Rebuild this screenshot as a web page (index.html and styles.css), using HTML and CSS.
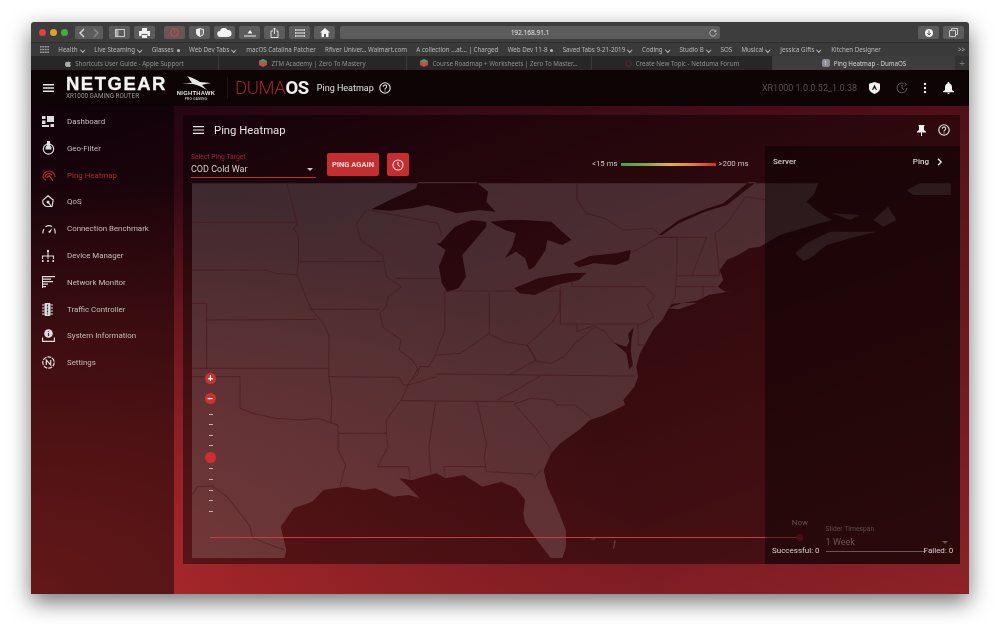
FILE: index.html
```html
<!DOCTYPE html>
<html lang="en">
<head>
<meta charset="utf-8">
<title>Ping Heatmap - DumaOS</title>
<link rel="stylesheet" href="styles.css">
</head>
<body>
<div class="window">
  <div class="toolbar">
    <div class="lights"><i class="light red"></i><i class="light yellow"></i><i class="light green"></i></div>
    <div class="tb-btn nav">
      <svg width="14" height="12" viewBox="0 0 14 12"><path d="M9 2 5 6l4 4" fill="none" stroke="#ddd" stroke-width="1.4"/></svg>
      <svg width="14" height="12" viewBox="0 0 14 12"><path d="m5 2 4 4-4 4" fill="none" stroke="#888" stroke-width="1.4"/></svg>
    </div>
    <div class="tb-btn"><svg width="10" height="8" viewBox="0 0 10 8"><rect x=".5" y=".5" width="9" height="7" fill="none" stroke="#ccc"/><rect x="1" y="1" width="2.5" height="6" fill="#aaa"/></svg></div>
    <div class="tb-btn"><svg width="11" height="10" viewBox="0 0 11 10"><path d="M3 0h5v3H3zM0 3h11v5H8.500V6h-6v2H0zM3 7h5v3H3z" fill="#eee"/></svg></div>
    <div class="tb-btn stop"><svg width="9" height="9" viewBox="0 0 9 9"><circle cx="4.500" cy="4.500" r="3.700" fill="none" stroke="#c0504f" stroke-width="1.100"/><path d="M4.500 2.200v2.500" stroke="#c0504f"/></svg></div>
    <div class="tb-btn"><svg width="8" height="9" viewBox="0 0 8 9"><path d="M4 0 8 1.300V5c0 2-2 3.300-4 4-2-.7-4-2-4-4V1.300z" fill="#eee"/><path d="M4 1 7 2v3c0 1.500-1.500 2.500-3 3z" fill="#777"/></svg></div>
    <div class="tb-btn"><svg width="15" height="9" viewBox="0 0 15 9"><path d="M3.500 9a3 3 0 0 1-.5-6 4 4 0 0 1 7.500-1 3.500 3.500 0 0 1 1 7z" fill="#f2f2f2"/></svg></div>
    <div class="tb-btn"><svg width="12" height="8" viewBox="0 0 12 8"><path d="M0 6.500h12v1H0zM6 1l2.500 3.500h-5z" fill="#eee"/></svg></div>
    <div class="tb-btn"><svg width="9" height="11" viewBox="0 0 9 11"><path d="M1 4h2M6 4h2M1 4v6.500h7V4" fill="none" stroke="#ddd"/><path d="M4.500 7V1M3 2.500 4.500 1 6 2.500" fill="none" stroke="#ddd"/></svg></div>
    <div class="tb-btn"><svg width="10" height="8" viewBox="0 0 10 8"><path d="M0 0h10v2H0zM0 3h10v2H0zM0 6h10v2H0z" fill="#ccc"/><path d="M2 0v8M4 0v8M6 0v8M8 0v8" stroke="#5d5d5d" stroke-width=".7"/></svg></div>
    <div class="tb-btn"><svg width="10" height="9" viewBox="0 0 10 9"><path d="M5 0 10 4.500H8.500V9H6V6H4v3H1.500V4.500H0z" fill="#f2f2f2"/></svg></div>
    <div class="url"><span class="url-text">192.168.91.1</span>
      <svg class="reload" width="8" height="8" viewBox="0 0 8 8"><path d="M6.800 2.500A3.200 3.200 0 1 0 7.200 4M6.900.8v1.900H5" fill="none" stroke="#ccc" stroke-width=".8"/></svg>
    </div>
    <div class="tb-btn wide"><svg width="8" height="8" viewBox="0 0 8 8"><circle cx="4" cy="4" r="4" fill="#f2f2f2"/><path d="M4 1.500V6M2.300 4.300 4 6l1.700-1.700" fill="none" stroke="#555"/></svg></div>
    <div class="tb-btn wide"><svg width="9" height="9" viewBox="0 0 9 9"><path d="M.5 2.500h6v6h-6zM2.500 2.500v-2h6v6h-2" fill="none" stroke="#ccc"/></svg></div>
  </div>

  <div class="bookmarks">
    <svg class="bm-grid" width="9" height="7" viewBox="0 0 9 7"><path d="M0 0h9v1.500H0zM0 2.700h9v1.500H0zM0 5.400h9V7H0z" fill="#999"/><path d="M2 0v7M4.500 0v7M7 0v7" stroke="#3a3a3a" stroke-width=".6"/></svg>
    <span class="bm menu">Health</span>
    <span class="bm menu">Live Steaming</span>
    <span class="bm dot">Glasses</span>
    <span class="bm menu">Web Dev Tabs</span>
    <span class="bm">macOS Catalina Patcher</span>
    <span class="bm">Rfiver Univer... Walmart.com</span>
    <span class="bm">A collection ...at... | Charged</span>
    <span class="bm dot">Web Dev 11-8</span>
    <span class="bm menu">Saved Tabs 9-21-2019</span>
    <span class="bm menu">Coding</span>
    <span class="bm menu">Studio B</span>
    <span class="bm">SOS</span>
    <span class="bm menu">Musical</span>
    <span class="bm menu">Jessica Gifts</span>
    <span class="bm">Kitchen Designer</span>
    <span class="bm more">&gt;&gt;</span>
  </div>

  <div class="tabs">
    <div class="tab"><svg width="6" height="7" viewBox="0 0 6 7"><path d="M4 0 3 1.500 4 1.700C4.800 2 6 2 6 2 4.800 3 5 5 6 5.200 5.500 6.500 4.800 7 4.300 7 3.800 7 3.500 6.700 3 6.700S2.200 7 1.700 7C.8 7 0 5.500 0 4c0-1.500 1-2.300 2-2.300.4 0 .7.100 1 .2z" fill="#aaa"/></svg>Shortcuts User Guide - Apple Support</div>
    <div class="tab"><svg width="8" height="8" viewBox="0 0 8 8"><path d="M4 0 8 2v4L4 8 0 6V2z" fill="#c0504a"/><path d="M4 0 8 2 4 4 0 2z" fill="#4f9a5c"/></svg>ZTM Academy | Zero To Mastery</div>
    <div class="tab"><svg width="8" height="8" viewBox="0 0 8 8"><path d="M4 0 8 2v4L4 8 0 6V2z" fill="#c0504a"/><path d="M4 0 8 2 4 4 0 2z" fill="#4f9a5c"/></svg>Course Roadmap + Worksheets | Zero To Master...</div>
    <div class="tab"><svg width="7" height="7" viewBox="0 0 7 7"><circle cx="3.500" cy="3.500" r="2.800" fill="none" stroke="#5c2a2a"/></svg>Create New Topic - Netduma Forum</div>
    <div class="tab active"><span class="tab-badge">1</span>Ping Heatmap - DumaOS</div>
    <div class="tab add">+</div>
  </div>

  <header class="app-header">
    <svg class="burger" width="11" height="8" viewBox="0 0 11 8"><path d="M0 0h11v1.400H0zM0 3.300h11v1.400H0zM0 6.600h11V8H0z" fill="#e8e8e8"/></svg>
    <div class="brand"><div class="netgear">NETGEAR</div><div class="model">XR1000 GAMING ROUTER</div></div>
    <div class="nighthawk">
      <svg width="30" height="14" viewBox="0 0 30 14"><path d="M6 0c6 2 10 4 13 6l11 1c-4 1-7 1-9 2l5 5c-5-3-9-5-14-6L1 8c4-.5 7-.5 10-1C9 4 8 2 6 0z" fill="#e8e8e8"/></svg>
      <div class="nh-name">NIGHTHAWK</div><div class="nh-sub">PRO GAMING</div>
    </div>
    <div class="duma"><span class="duma-thin">DUMA</span><span class="duma-bold">OS</span></div>
    <div class="head-title">Ping Heatmap</div>
    <svg class="help" width="12" height="12" viewBox="0 0 12 12"><circle cx="6" cy="6" r="5.200" fill="none" stroke="#e8e8e8" stroke-width="1.100"/><path d="M4.300 4.700A1.700 1.700 0 1 1 6.800 6.100C6.200 6.500 6 6.800 6 7.500M6 8.400v1.100" fill="none" stroke="#e8e8e8" stroke-width="1.100"/></svg>
    <div class="version">XR1000 1.0.0.52_1.0.38</div>
    <div class="head-icons">
      <svg width="11" height="12" viewBox="0 0 11 12"><path d="M5.500 0 11 1.800V6.500C11 9 8.500 11 5.500 12 2.500 11 0 9 0 6.500V1.800z" fill="#f2f2f2"/><path d="M5.500 2.500 8 8H7L5.500 6 4 8H3z" fill="#111"/></svg>
      <svg width="12" height="12" viewBox="0 0 12 12"><path d="M10.800 6A4.900 4.900 0 1 1 7.500 1.300M6 3v3.300l2 1.200M8.500.8l2 1.500-2 1.500" fill="none" stroke="#6b5b5b" stroke-width="1"/></svg>
      <svg width="4" height="12" viewBox="0 0 4 12"><circle cx="2" cy="2" r="1.200" fill="#eee"/><circle cx="2" cy="6" r="1.200" fill="#eee"/><circle cx="2" cy="10" r="1.200" fill="#eee"/></svg>
      <svg width="11" height="12" viewBox="0 0 11 12"><path d="M5.500 0c.6 0 1 .4 1 1v.6C8.300 2 9 3.600 9 5.500V8l2 1.500v.7H0v-.7L2 8V5.500C2 3.600 2.700 2 4.500 1.600V1c0-.6.400-1 1-1zM4.200 10.800h2.600c0 .7-.6 1.200-1.300 1.200s-1.300-.5-1.300-1.200z" fill="#f4f4f4"/></svg>
    </div>
  </header>

  <div class="app">
    <nav class="sidebar">
      <a class="nav-item"><svg width="12" height="11" viewBox="0 0 12 11"><path d="M0 0h3.500v3H0zM5 0h7v6H5zM0 4.500h3.500V8H0zM0 9h7v2H0zM8.500 8H12v3H8.500z" fill="#ddd"/></svg>Dashboard</a>
      <a class="nav-item"><svg width="13" height="14" viewBox="0 0 13 14"><circle cx="6.500" cy="8" r="5.200" fill="none" stroke="#ddd" stroke-width="1.200"/><path d="M5 0h3v4l1.500 2.500v2h-6v-2L5 4z" fill="#ddd"/></svg>Geo-Filter</a>
      <a class="nav-item current"><svg width="14" height="12" viewBox="0 0 14 12"><path d="M1 8a6 6 0 0 1 12 0M3 8.500a4 4 0 0 1 7-2.500M5 9a2 2 0 0 1 3-1.500M7 6l4 6" fill="none" stroke="#b3262b" stroke-width="1.200"/><path d="M1 8c.5 1.500 1.500 2.500 3 3.300" fill="none" stroke="#b3262b" stroke-width="1.200"/></svg>Ping Heatmap</a>
      <a class="nav-item"><svg width="12" height="13" viewBox="0 0 12 13"><path d="M6 .8 11.200 5 10 11.500H5A5 5 0 0 1 1 5z" fill="none" stroke="#ddd" stroke-width="1.200"/><circle cx="6" cy="7" r="1.500" fill="#ddd"/><path d="m6 7 3 4" stroke="#ddd" stroke-width="1.200"/></svg>QoS</a>
      <a class="nav-item"><svg width="14" height="10" viewBox="0 0 14 10"><path d="M1 9.500A6 6 0 0 1 2 5M3.500 2.800A6 6 0 0 1 10 2.500M12 4.500a6 6 0 0 1 1 5" fill="none" stroke="#ddd" stroke-width="1.200"/><path d="M6 8 10.500 4 8 9z" fill="#ddd"/></svg>Connection Benchmark</a>
      <a class="nav-item"><svg width="12" height="12" viewBox="0 0 12 12"><path d="M5 0h2v2H5zM5.500 2h1v4h-1zM0 5.500h12v1H0zM0 6.500h1V9H0zM11 6.500h1V9h-1zM5.500 6.500h1V9h-1zM0 10h1.500v2H0zM5.200 10h1.600v2H5.200zM10.500 10H12v2h-1.500z" fill="#ddd"/></svg>Device Manager</a>
      <a class="nav-item"><svg width="13" height="12" viewBox="0 0 13 12"><path d="M0 0h1v12H0zM1 0h12v1.300H1zM1 2.500h8v1.300H1zM1 5h10v1.300H1zM1 7.500h5v1.300H1zM1 10h3v1.300H1z" fill="#ddd"/></svg>Network Monitor</a>
      <a class="nav-item"><svg width="11" height="13" viewBox="0 0 11 13"><rect x="2.500" y="0" width="6" height="13" rx="1" fill="#ddd"/><path d="M0 2h2.500M0 5h2.500M0 8h2.500M0 11h2.500M8.500 2H11M8.500 5H11M8.500 8H11M8.500 11H11" stroke="#ddd"/><path d="M5.500 1.500v10" stroke="#333" stroke-width="1.200" stroke-dasharray="2 1"/></svg>Traffic Controller</a>
      <a class="nav-item"><svg width="13" height="13" viewBox="0 0 13 13"><circle cx="6.500" cy="4.500" r="4.300" fill="#ddd"/><path d="M6.500 2.200v.9M6.500 4v3" stroke="#333" stroke-width="1.200"/><path d="M.6 8.500V12.300H12.400V8.500" fill="none" stroke="#ddd" stroke-width="1.200"/></svg>System Information</a>
      <a class="nav-item"><svg width="13" height="13" viewBox="0 0 13 13"><circle cx="6.500" cy="6.500" r="5.700" fill="none" stroke="#ddd" stroke-width="1.200" stroke-dasharray="4 1"/><path d="M4.300 9V4l4.400 5V4" fill="none" stroke="#ddd" stroke-width="1.200"/></svg>Settings</a>
    </nav>

    <main class="main">
      <section class="card">
        <div class="card-head">
          <svg width="11" height="8" viewBox="0 0 11 8"><path d="M0 0h11v1.200H0zM0 3.400h11v1.200H0zM0 6.800h11V8H0z" fill="#e8e8e8"/></svg>
          <h1 class="card-title">Ping Heatmap</h1>
          <div class="card-actions">
            <svg width="9" height="11" viewBox="0 0 9 11"><path d="M1.500 0h6v1H7v4l2 1.500v1H5V11H4V7.500H0v-1L2 5V1h-.5z" fill="#eee"/></svg>
            <svg width="12" height="12" viewBox="0 0 12 12"><circle cx="6" cy="6" r="5.200" fill="none" stroke="#e8e8e8" stroke-width="1.100"/><path d="M4.300 4.700A1.700 1.700 0 1 1 6.800 6.100C6.200 6.500 6 6.800 6 7.500M6 8.400v1.100" fill="none" stroke="#e8e8e8" stroke-width="1.100"/></svg>
          </div>
        </div>
        <div class="controls">
          <div class="select">
            <div class="select-label">Select Ping Target</div>
            <div class="select-value">COD Cold War<i class="caret"></i></div>
          </div>
          <button class="btn ping">PING AGAIN</button>
          <button class="btn clock"><svg width="12" height="12" viewBox="0 0 12 12"><circle cx="6" cy="6" r="5" fill="none" stroke="#f1d9d9" stroke-width="1.100"/><path d="M6 3v3.200l2.200 1.300" fill="none" stroke="#f1d9d9" stroke-width="1"/></svg></button>
          <div class="legend"><span>&lt;15 ms</span><i class="legend-bar"></i><span>&gt;200 ms</span></div>
        </div>
        <div class="map">
          <svg class="map-svg" viewBox="5.400 6 2049.300 1128" preserveAspectRatio="none">
            <path class="land" fill-rule="evenodd" d="M0 10H1696L1687 40 1665 65 1696 95 1732 120 1683 135 1593 165 1539 200 1510 205 1480 225 1450 240 1430 270 1440 300 1425 320 1445 335 1465 333 1400 345 1370 362 1300 372 1285 400 1275 420 1250 450 1235 480 1215 520 1205 560 1210 590 1200 620 1170 660 1175 675 1120 705 1080 720 1050 750 1000 790 975 820 955 870 965 920 990 980 1015 1050 1015 1100 1005 1135 975 1135 940 1085 905 1030 900 1000 905 960 880 925 840 905 790 920 740 885 690 895 665 880 600 900 565 895 590 920 620 955 590 945 550 950 500 925 470 930 420 920 360 930 330 965 280 985 245 1040 260 1110 255 1135H0Z
            M490 88 540 60 610 25 620-5H760L805 35 800 65 825 95 780 90 720 100 680 85 640 75 600 85 540 92Z
            M675 190 715 140 760 120 800 125 800 140 770 180 735 225 745 290 725 325 695 335 680 310 672 260 690 210 665 190Z
            M810 125 860 120 900 120 975 125 1000 150 1030 180 1005 195 965 180 960 210 930 260 915 270 905 235 880 215 850 235 870 200 880 160 850 150Z
            M875 325 940 295 1020 280 1070 278 1050 300 990 315 930 345 890 340Z
            M1035 250 1080 228 1150 220 1190 210 1185 240 1150 255 1090 250 1050 262Z
            M1265 165 1320 120 1390 88 1440 70 1510 5 1530 5 1450 75 1390 95 1320 130 1275 165Z
            M1198 442 1183 462 1186 485 1178 500 1145 488 1178 520 1186 568 1196 555 1190 515 1192 480Z"/>
            <path class="land" d="M1290 385 1330 368 1370 368 1320 388ZM1634 220 1665 190 1728 155 1854 155 1782 175 1719 195 1674 235 1656 243ZM1732 100 1809 105 1782 120ZM1845 120 1885 80 1908 120 1872 140ZM1935 30 1971 10 2054 10V45H1953ZM1080 1078 1098 1072 1090 1080ZM1145 1080 1150 1082 1145 1108 1142 1105Z"/>
            <g class="borders">
              <path d="M262 10 280 90 290 130 280 145 293 170V245M5 127H285M293 245H520M475 90 450 130 460 180 520 225 530 290 570 320 535 350 530 380 513 400 520 440 570 480 565 510 600 540 615 565 600 600"/>
              <path d="M480 90 600 115 670 130 680 170M5 270H205L230 280 290 285 320 370 330 390 360 430 375 465V565M293 245 288 285M320 388H513M5 370H45V565M45 420 340 418M5 565H375V590"/>
              <path d="M5 590H135V685L170 700 230 715 300 720 345 715 400 735M375 590 383 660 380 730M375 590 565 592 575 615H590M400 735V810L420 855 405 920M400 760H530M555 295H675"/>
              <path d="M688 335V450L660 530 645 560H620L615 585 595 600 570 660 530 720V760L535 800 507 860H590L595 895M688 333H1000M808 335V460L770 490 730 520 665 525M808 463 850 485 905 495 915 500"/>
              <path d="M1000 320 998 390 975 430 910 495 935 540 860 585M915 500 935 545 975 550 1010 530 1040 490 1095 440 1120 455 1145 490M1030 320H1230L1255 350 1235 375 1252 410 1220 432H1000V330M1045 432V455L1095 435M1210 432V495H1240"/>
              <path d="M665 582 1200 588M590 615 665 590M570 662 875 665M663 665 645 800 650 880M775 665 800 790 795 830 800 875 925 882 930 890 950 870M685 860H800M685 860 690 890M945 588 890 625 830 660"/>
              <path d="M875 672 920 655 980 660 990 675H1040L1085 715M875 672 930 740 975 808M1035 290 1030 320M1190 220 1265 172H1315V250L1310 350 1300 370M1265 172H1395L1355 285M1418 160 1430 285M1315 287H1430M1310 320H1420M1385 320V350M1418 160 1450 130 1500 50 1560 60"/>
              <path d="M1045 10V60L1070 100 1120 115 1170 150 1250 145 1265 160M5 945 20 920 60 918 100 950 160 1035 170 1075 255 1110"/>
            </g>
          </svg>
          <div class="zoom-slider">
            <button class="zoom-btn">+</button>
            <button class="zoom-btn">&minus;</button>
            <div class="ticks">
              <i class="tick"></i><i class="tick"></i><i class="tick"></i><i class="tick"></i>
              <i class="thumb"></i>
              <i class="tick"></i><i class="tick"></i><i class="tick"></i><i class="tick"></i><i class="tick"></i>
            </div>
          </div>
          <div class="timeline"><span class="now">Now</span><i class="timeline-dot"></i></div>
        </div>
        <aside class="server-panel">
          <div class="server-head"><span>Server</span><span class="ping-col">Ping</span>
            <svg width="6" height="8" viewBox="0 0 6 8"><path d="m1 .8 3.200 3.200L1 7.200" fill="none" stroke="#eee" stroke-width="1.300"/></svg>
          </div>
        </aside>
        <div class="stats">
          <span class="stat">Successful: 0</span>
          <div class="timespan">
            <div class="ts-label">Slider Timespan</div>
            <div class="ts-value">1 Week<i class="caret dim"></i></div>
          </div>
          <span class="stat">Failed: 0</span>
        </div>
      </section>
    </main>
  </div>
</div>
</body>
</html>
```
FILE: styles.css
```css
* { box-sizing: border-box; }
html, body { margin: 0; height: 100%; background: #fff; overflow: hidden; }
body { padding: 22px 31px 41px; font-family: Roboto, "Liberation Sans", sans-serif; }

.window {
  height: 572px;
  display: flex;
  flex-direction: column;
  box-shadow: 0 8px 22px rgba(0, 0, 0, .55);
  border-radius: 3px 3px 0 0;
  overflow: hidden;
  filter: blur(.45px);
}

/* browser chrome */
.toolbar {
  height: 20px;
  flex: none;
  display: flex;
  align-items: center;
  gap: 4px;
  padding: 1px 5px 0 8px;
  background: #3d3d3d;
}
.lights { display: flex; gap: 4px; width: 32px; }
.light { width: 7px; height: 7px; border-radius: 50%; }
.red { background: #e0443e; }
.yellow { background: #dba129; }
.green { background: #3db13f; }
.tb-btn {
  width: 21px;
  height: 13px;
  flex: none;
  display: flex;
  align-items: center;
  justify-content: center;
  background: #5c5c5c;
  border-radius: 2px;
}
.tb-btn.nav { width: 28px; margin-right: 2px; }
.tb-btn.stop { background: #6b5555; margin-left: 5px; }
.url {
  width: 380px;
  height: 13px;
  margin-left: 1px;
  margin-right: auto;
  display: flex;
  align-items: center;
  justify-content: center;
  position: relative;
  background: #5c5c5c;
  border-radius: 2px;
}
.url-text { font: 6.500px "Noto Sans", sans-serif; color: #e4e4e4; }
.reload { position: absolute; right: 3px; top: 3px; }

.bookmarks {
  height: 14px;
  flex: none;
  display: flex;
  align-items: center;
  gap: 9.300px;
  padding: 0 4px 0 9px;
  background: #3a3a3a;
  border-top: 1px solid #2e2e2e;
  font: 6.200px "Noto Sans", sans-serif;
  color: #b8b8b8;
  white-space: nowrap;
}
.bm.menu::after {
  content: "";
  display: inline-block;
  width: 2.500px;
  height: 2.500px;
  margin: 0 1px 1px 3px;
  border-right: 1px solid #b8b8b8;
  border-bottom: 1px solid #b8b8b8;
  transform: rotate(45deg);
}
.bm.dot::after {
  content: "";
  display: inline-block;
  width: 3px;
  height: 3px;
  margin-left: 3px;
  border-radius: 50%;
  background: #b8b8b8;
}
.more { margin-left: auto; }

.tabs {
  height: 14px;
  flex: none;
  display: grid;
  grid-template-columns: 188px 188px 185px 181px 182px 14px;
  background: #272727;
  font: 6.200px "Noto Sans", sans-serif;
  color: #8f8f8f;
  white-space: nowrap;
}
.tab {
  display: flex;
  align-items: center;
  justify-content: center;
  gap: 4px;
  border-right: 1px solid #3a3a3a;
  overflow: hidden;
}
.tab.active { background: #3d3d3d; color: #d6d6d6; border: 0; }
.tab.add { background: #333; color: #777; font-size: 10px; border: 0; }
.tab-badge {
  width: 8px;
  height: 8px;
  border-radius: 2px;
  background: #8b8b95;
  color: #eee;
  font-size: 5px;
  line-height: 8px;
  text-align: center;
}

/* app header */
.app-header {
  height: 36px;
  flex: none;
  display: flex;
  align-items: center;
  padding-left: 12px;
  background: #0d0204;
  color: #e8e8e8;
}
.burger { flex: none; }
.brand { margin-left: 12px; width: 108px; }
.netgear {
  font: 700 18.500px/15px "Liberation Sans", sans-serif;
  letter-spacing: 1.500px;
  -webkit-text-stroke: .3px #f4f4f4;
  color: #f4f4f4;
}
.model {
  margin-top: 2px;
  font-size: 6.300px;
  line-height: 7px;
  color: #9a9a9a;
  white-space: nowrap;
}
.nighthawk { width: 44px; display: flex; flex-direction: column; align-items: center; }
.nh-name {
  font: 700 5.800px/7px "Liberation Sans", sans-serif;
  letter-spacing: .3px;
  color: #e8e8e8;
}
.nh-sub { font: 700 3px/4px "Liberation Sans", sans-serif; color: #bbb; letter-spacing: .3px; }
.duma {
  margin-left: 9px;
  padding-left: 7px;
  border-left: 1px solid #2b1115;
  font-size: 18.500px;
  line-height: 22px;
  letter-spacing: -.4px;
  white-space: nowrap;
}
.duma-thin { font-weight: 300; color: #a3242a; }
.duma-bold { font-weight: 700; color: #f0f0f0; }
.head-title { margin-left: 8px; font-size: 9px; color: #e4e4e4; white-space: nowrap; }
.help { margin-left: 5px; }
.version { margin-left: auto; font-size: 9px; color: #5f4f4f; white-space: nowrap; }
.head-icons {
  width: 100px;
  margin-left: 12px;
  padding-right: 15px;
  display: flex;
  align-items: center;
  justify-content: space-between;
}

/* app body */
.app {
  flex: 1;
  display: flex;
  min-height: 0;
  background:
    radial-gradient(ellipse 620px 420px at 0 100%, #b52b2d 0, rgba(181, 43, 45, 0) 100%),
    linear-gradient(160deg, #1d0312 0, #561119 45%, #8d2227 100%);
}
.sidebar {
  width: 143px;
  flex: none;
  padding: 2.200px 0 0 10px;
  background: rgba(0, 0, 0, .45);
}
.nav-item {
  height: 26.800px;
  display: grid;
  grid-template-columns: 16px 1fr;
  column-gap: 10px;
  align-items: center;
  justify-items: start;
  font-size: 7.900px;
  color: #c8bebe;
  white-space: nowrap;
}
.nav-item > svg { margin-left: 1px; }
.nav-item.current { color: #b3262b; }

.main { flex: 1; min-width: 0; padding: 9px 9px 30px; }
.card {
  height: 100%;
  position: relative;
  display: flex;
  flex-direction: column;
  background: rgba(0, 0, 0, .45);
}
.card-head {
  height: 30px;
  margin-bottom: 1px;
  flex: none;
  display: flex;
  align-items: center;
  gap: 10px;
  padding: 0 10px;
  color: #e4e4e4;
}
.card-title { margin: 0; font-size: 11.300px; font-weight: 400; }
.card-actions { margin-left: auto; display: flex; align-items: center; gap: 12px; }
.controls {
  height: 36px;
  flex: none;
  display: flex;
  align-items: flex-start;
  padding: 7px 0 0 8px;
}
.select { width: 125px; height: 25px; border-bottom: 1.500px solid #c42e31; }
.select-label { font-size: 6.800px; line-height: 8px; color: #a8262b; }
.select-value {
  display: flex;
  align-items: center;
  justify-content: space-between;
  margin-top: 2px;
  font-size: 9px;
  line-height: 12px;
  color: #d8d0d0;
}
.caret {
  width: 0;
  height: 0;
  margin-right: 3px;
  border: 3px solid transparent;
  border-top-color: #ccc;
  border-bottom: 0;
}
.caret.dim { border-top-color: #6b5555; }
.btn {
  height: 23px;
  padding: 0;
  border: 0;
  border-radius: 2px;
  background: #c42e31;
  color: #f1d9d9;
  font: 700 7.500px Roboto, sans-serif;
  display: flex;
  align-items: center;
  justify-content: center;
}
.ping { width: 52px; margin-left: 11px; }
.clock { width: 22px; margin-left: 8px; }
.legend {
  margin-left: 183px;
  margin-top: 5px;
  display: flex;
  align-items: center;
  gap: 3px;
  font-size: 7.800px;
  line-height: 12px;
  color: #cfc5c5;
}
.legend-bar {
  width: 95px;
  height: 3px;
  background: linear-gradient(90deg, #3fa34d 0, #79a84a 25%, #e6b23e 52%, #e0823a 75%, #cf2d2d 100%);
}

/* map */
.map {
  height: 376px;
  width: 759px;
  margin-left: 9px;
  position: relative;
  flex: none;
}
.map-svg { display: block; width: 100%; height: 100%; }
.land { fill: rgba(255, 255, 255, .15); }
.borders path {
  fill: none;
  stroke: rgba(70, 15, 20, .5);
  stroke-width: 1;
  stroke-linejoin: round;
  vector-effect: non-scaling-stroke;
}
.zoom-slider {
  position: absolute;
  left: 13px;
  top: 190.500px;
  width: 11px;
  display: flex;
  flex-direction: column;
  align-items: center;
  gap: 9.500px;
}
.zoom-btn {
  width: 11px;
  height: 11px;
  padding: 0;
  border: 0;
  border-radius: 50%;
  background: #d0302f;
  color: #fff;
  font: 700 10px/11px "Liberation Sans", sans-serif;
  text-align: center;
}
.ticks { display: flex; flex-direction: column; align-items: center; gap: 9.600px; }
.tick { width: 4px; height: 1px; background: #c9b3b3; }
.thumb { width: 11px; height: 11px; margin: -4px 0; border-radius: 50%; background: #cf2e2e; }
.timeline {
  position: absolute;
  left: 18px;
  top: 354.500px;
  width: 590px;
  height: 1.600px;
  background: #d03a3d;
}
.timeline-dot {
  position: absolute;
  right: -3px;
  top: -3px;
  width: 7px;
  height: 7px;
  border-radius: 50%;
  background: #7d1c20;
}
.now { position: absolute; right: -8px; top: -19px; font-size: 8px; line-height: 10px; color: #a08888; }

/* right panel */
.server-panel {
  position: absolute;
  right: 0;
  top: 31px;
  bottom: 0;
  width: 195px;
  background: rgba(0, 0, 0, .42);
}
.server-head {
  display: flex;
  align-items: center;
  padding: 11px 17px 0 8px;
  font-size: 8px;
  font-weight: 500;
  line-height: 10px;
  color: #d8d0d0;
}
.ping-col { margin-left: auto; margin-right: 8px; }
.stats {
  position: absolute;
  left: 589px;
  right: 8px;
  top: 410px;
  display: flex;
  align-items: flex-end;
  color: #d8d0d0;
  font-size: 8px;
  line-height: 10px;
}
.stat { white-space: nowrap; }
.timespan {
  width: 100px;
  margin: 0 -2px 4px 6px;
  height: 27px;
  border-bottom: 1px solid #6b5555;
}
.ts-label { font-size: 6.800px; line-height: 8px; color: #5f4b4b; }
.ts-value {
  width: 125px;
  display: flex;
  align-items: center;
  justify-content: space-between;
  margin-top: 3px;
  font-size: 9px;
  line-height: 12px;
  color: #6b5757;
}
```
